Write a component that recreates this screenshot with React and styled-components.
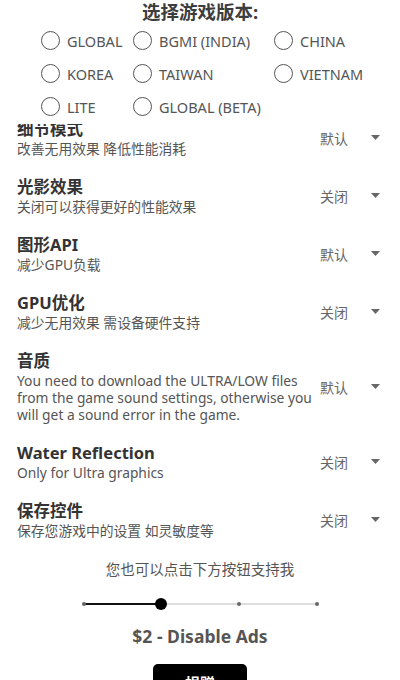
import React, { useLayoutEffect, useRef } from 'react';
import styled, { createGlobalStyle } from 'styled-components';

const GlobalStyle = createGlobalStyle`
  body {
    margin: 0;
    background: #fff;
    font-family: "Noto Sans", "Noto Sans CJK SC", sans-serif;
  }
`;

const versions = ['GLOBAL', 'BGMI (INDIA)', 'CHINA', 'KOREA', 'TAIWAN', 'VIETNAM', 'LITE', 'GLOBAL (BETA)'];

const settings = [
  { title: '细节模式', desc: '改善无用效果 降低性能消耗', value: '默认' },
  { title: '光影效果', desc: '关闭可以获得更好的性能效果', value: '关闭' },
  { title: '图形API', desc: '减少GPU负载', value: '默认' },
  { title: 'GPU优化', desc: '减少无用效果 需设备硬件支持', value: '关闭' },
  {
    title: '音质',
    desc: 'You need to download the ULTRA/LOW files from the game sound settings, otherwise you will get a sound error in the game.',
    value: '默认',
  },
  { title: 'Water Reflection', desc: 'Only for Ultra graphics', value: '关闭' },
  { title: '保存控件', desc: '保存您游戏中的设置 如灵敏度等', value: '关闭' },
];

const App = () => {
  const listRef = useRef(null);

  // the list is shown scrolled a little, first row half under the header
  useLayoutEffect(() => {
    if (listRef.current) listRef.current.scrollTop = 16;
  }, []);

  return (
    <Page>
      <GlobalStyle />
      <Header>
        <Heading>选择游戏版本:</Heading>
        <RadioGrid>
          {versions.map((v) => (
            <RadioItem key={v}>
              <Circle />
              <span>{v}</span>
            </RadioItem>
          ))}
        </RadioGrid>
      </Header>
      <List ref={listRef}>
        {settings.map((s) => (
          <Row key={s.title}>
            <TextCol>
              <Title>{s.title}</Title>
              <Desc>{s.desc}</Desc>
            </TextCol>
            <Select>
              <span>{s.value}</span>
              <svg width="9" height="5" viewBox="0 0 9 5">
                <path d="M0 0 L9 0 L4.5 5 Z" fill="#666" />
              </svg>
            </Select>
          </Row>
        ))}
        <Footer>
          <Support>您也可以点击下方按钮支持我</Support>
          <Slider>
            <Track />
            <Fill style={{ width: `${(1 / 3) * 100}%` }} />
            <Dot pos={0} />
            <Dot pos={66.67} />
            <Dot pos={100} />
            <Thumb style={{ left: `${(1 / 3) * 100}%` }} />
          </Slider>
          <Price>$2 - Disable Ads</Price>
          <DonateButton>捐赠</DonateButton>
        </Footer>
      </List>
    </Page>
  );
};

export default App;

const Page = styled.div`
  height: 680px;
  display: flex;
  flex-direction: column;
  overflow: hidden;
`;

const Header = styled.div`
  flex: none;
  height: 124px;
  overflow: hidden;
  background: #fff;
`;

const Heading = styled.div`
  text-align: center;
  font-size: 18.5px;
  font-weight: 700;
  line-height: 24px;
  color: #3d3d3d;
`;

const RadioGrid = styled.div`
  display: grid;
  grid-template-columns: 92px 141px auto;
  grid-auto-rows: 33px;
  padding-left: 41px;
`;

const RadioItem = styled.div`
  display: flex;
  align-items: center;
  gap: 7px;
  font-size: 14.5px;
  color: #555;
  white-space: nowrap;
`;

const Circle = styled.span`
  width: 17px;
  height: 17px;
  border: 1.6px solid #555;
  border-radius: 50%;
  flex: none;
`;

const List = styled.div`
  flex: 1;
  overflow: hidden;
`;

const Row = styled.div`
  display: flex;
  align-items: center;
  padding: 10px 20px 9px 17px;
`;

const TextCol = styled.div`
  flex: 1;
  padding-right: 1px;
`;

const Title = styled.div`
  font-size: 16.5px;
  font-weight: 700;
  line-height: 22px;
  color: #333;
`;

const Desc = styled.div`
  font-size: 13.8px;
  line-height: 17px;
  color: #555;
`;

const Select = styled.div`
  flex: none;
  width: 60px;
  display: flex;
  align-items: center;
  justify-content: space-between;
  font-size: 14px;
  color: #666;
`;

const Footer = styled.div`
  display: flex;
  flex-direction: column;
  align-items: center;
  padding-top: 11px;
`;

const Support = styled.div`
  font-size: 14.5px;
  line-height: 20px;
  color: #555;
`;

const Slider = styled.div`
  position: relative;
  width: 233px;
  height: 20px;
  margin-top: 15px;
`;

const Track = styled.div`
  position: absolute;
  left: 0;
  right: 0;
  top: 9px;
  height: 2px;
  background: #ddd;
`;

const Fill = styled.div`
  position: absolute;
  left: 0;
  top: 9px;
  height: 2px;
  background: #111;
`;

const Dot = styled.div`
  position: absolute;
  top: 8px;
  left: calc(${(p) => p.pos}% - 2px);
  width: 4px;
  height: 4px;
  border-radius: 50%;
  background: #666;
`;

const Thumb = styled.div`
  position: absolute;
  top: 4px;
  width: 12px;
  height: 12px;
  margin-left: -6px;
  border-radius: 50%;
  background: #000;
`;

const Price = styled.div`
  margin-top: 10px;
  font-size: 17.5px;
  font-weight: 700;
  line-height: 24px;
  color: #555;
`;

const DonateButton = styled.button`
  margin-top: 16px;
  width: 94px;
  height: 36px;
  border: none;
  border-radius: 5px;
  background: #000;
  color: #fff;
  font-family: inherit;
  font-size: 15px;
  font-weight: 700;
`;
